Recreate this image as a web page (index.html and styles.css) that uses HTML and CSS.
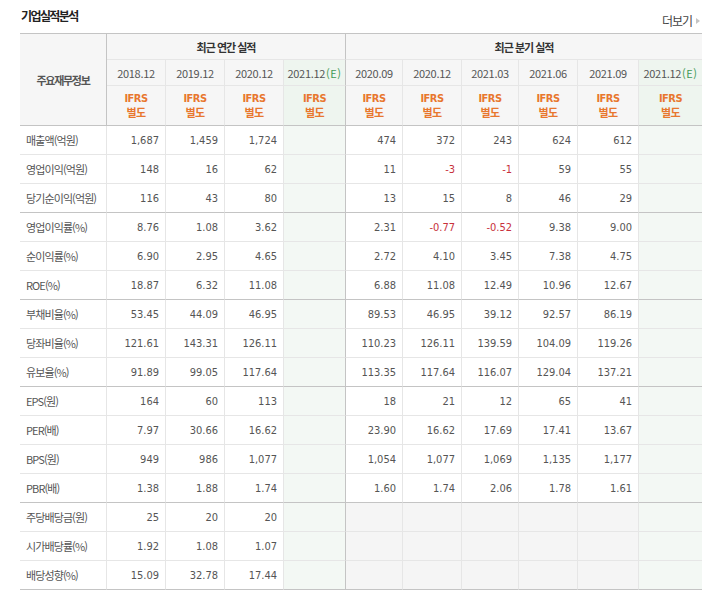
FILE: index.html
```html
<!DOCTYPE html>
<html lang="ko">
<head>
<meta charset="utf-8">
<link rel="stylesheet" href="styles.css">
</head>
<body>
<div class="wrap">
  <div class="head">
    <h3 class="title">기업실적분석</h3>
    <a class="more">더보기<span class="tri"></span></a>
  </div>
  <table class="fin">
    <colgroup>
      <col class="w-label"><col class="w59"><col class="w59"><col class="w59"><col class="w62">
      <col class="w57"><col class="w59"><col class="w57"><col class="w59"><col class="w61"><col class="w63">
    </colgroup>
    <thead>
      <tr class="h1">
        <th rowspan="3" class="corner sep-r sep-b">주요재무정보</th>
        <th colspan="4" class="grp sep-r">최근 연간 실적</th>
        <th colspan="6" class="grp last">최근 분기 실적</th>
      </tr>
      <tr class="h2">
        <th class="dt">2018.12</th>
        <th class="dt">2019.12</th>
        <th class="dt">2020.12</th>
        <th class="dt est sep-r">2021.12<em>(E)</em></th>
        <th class="dt">2020.09</th>
        <th class="dt">2020.12</th>
        <th class="dt">2021.03</th>
        <th class="dt">2021.06</th>
        <th class="dt">2021.09</th>
        <th class="dt est last">2021.12<em>(E)</em></th>
      </tr>
      <tr class="h3">
        <th class="ifrs sep-b">IFRS<br>별도</th>
        <th class="ifrs sep-b">IFRS<br>별도</th>
        <th class="ifrs sep-b">IFRS<br>별도</th>
        <th class="ifrs est sep-b sep-r">IFRS<br>별도</th>
        <th class="ifrs sep-b">IFRS<br>별도</th>
        <th class="ifrs sep-b">IFRS<br>별도</th>
        <th class="ifrs sep-b">IFRS<br>별도</th>
        <th class="ifrs sep-b">IFRS<br>별도</th>
        <th class="ifrs sep-b">IFRS<br>별도</th>
        <th class="ifrs est sep-b last">IFRS<br>별도</th>
      </tr>
    </thead>
    <tbody>
      <tr><th class="lbl">매출액(억원)</th><td>1,687</td><td>1,459</td><td>1,724</td><td class="est sep-r"></td><td>474</td><td>372</td><td>243</td><td>624</td><td>612</td><td class="est last"></td></tr>
      <tr><th class="lbl">영업이익(억원)</th><td>148</td><td>16</td><td>62</td><td class="est sep-r"></td><td>11</td><td class="neg">-3</td><td class="neg">-1</td><td>59</td><td>55</td><td class="est last"></td></tr>
      <tr class="gend"><th class="lbl">당기순이익(억원)</th><td>116</td><td>43</td><td>80</td><td class="est sep-r"></td><td>13</td><td>15</td><td>8</td><td>46</td><td>29</td><td class="est last"></td></tr>
      <tr><th class="lbl">영업이익률(%)</th><td>8.76</td><td>1.08</td><td>3.62</td><td class="est sep-r"></td><td>2.31</td><td class="neg">-0.77</td><td class="neg">-0.52</td><td>9.38</td><td>9.00</td><td class="est last"></td></tr>
      <tr><th class="lbl">순이익률(%)</th><td>6.90</td><td>2.95</td><td>4.65</td><td class="est sep-r"></td><td>2.72</td><td>4.10</td><td>3.45</td><td>7.38</td><td>4.75</td><td class="est last"></td></tr>
      <tr class="gend"><th class="lbl">ROE(%)</th><td>18.87</td><td>6.32</td><td>11.08</td><td class="est sep-r"></td><td>6.88</td><td>11.08</td><td>12.49</td><td>10.96</td><td>12.67</td><td class="est last"></td></tr>
      <tr><th class="lbl">부채비율(%)</th><td>53.45</td><td>44.09</td><td>46.95</td><td class="est sep-r"></td><td>89.53</td><td>46.95</td><td>39.12</td><td>92.57</td><td>86.19</td><td class="est last"></td></tr>
      <tr><th class="lbl">당좌비율(%)</th><td>121.61</td><td>143.31</td><td>126.11</td><td class="est sep-r"></td><td>110.23</td><td>126.11</td><td>139.59</td><td>104.09</td><td>119.26</td><td class="est last"></td></tr>
      <tr class="gend"><th class="lbl">유보율(%)</th><td>91.89</td><td>99.05</td><td>117.64</td><td class="est sep-r"></td><td>113.35</td><td>117.64</td><td>116.07</td><td>129.04</td><td>137.21</td><td class="est last"></td></tr>
      <tr><th class="lbl">EPS(원)</th><td>164</td><td>60</td><td>113</td><td class="est sep-r"></td><td>18</td><td>21</td><td>12</td><td>65</td><td>41</td><td class="est last"></td></tr>
      <tr><th class="lbl">PER(배)</th><td>7.97</td><td>30.66</td><td>16.62</td><td class="est sep-r"></td><td>23.90</td><td>16.62</td><td>17.69</td><td>17.41</td><td>13.67</td><td class="est last"></td></tr>
      <tr><th class="lbl">BPS(원)</th><td>949</td><td>986</td><td>1,077</td><td class="est sep-r"></td><td>1,054</td><td>1,077</td><td>1,069</td><td>1,135</td><td>1,177</td><td class="est last"></td></tr>
      <tr class="gend"><th class="lbl">PBR(배)</th><td>1.38</td><td>1.88</td><td>1.74</td><td class="est sep-r"></td><td>1.60</td><td>1.74</td><td>2.06</td><td>1.78</td><td>1.61</td><td class="est last"></td></tr>
      <tr><th class="lbl">주당배당금(원)</th><td>25</td><td>20</td><td>20</td><td class="est sep-r"></td><td class="na"></td><td class="na"></td><td class="na"></td><td class="na"></td><td class="na"></td><td class="est na last"></td></tr>
      <tr><th class="lbl">시가배당률(%)</th><td>1.92</td><td>1.08</td><td>1.07</td><td class="est sep-r"></td><td class="na"></td><td class="na"></td><td class="na"></td><td class="na"></td><td class="na"></td><td class="est na last"></td></tr>
      <tr class="gend"><th class="lbl">배당성향(%)</th><td>15.09</td><td>32.78</td><td>17.44</td><td class="est sep-r"></td><td class="na"></td><td class="na"></td><td class="na"></td><td class="na"></td><td class="na"></td><td class="est na last"></td></tr>
    </tbody>
  </table>
</div>
</body>
</html>
```
FILE: styles.css
```css
html, body {
  margin: 0;
  padding: 0;
  background: #fff;
}
body {
  font-family: "Noto Sans CJK KR", "Noto Sans", sans-serif;
  color: #444;
}
.wrap {
  padding-left: 20px;
  width: 682px;
}
.head {
  display: flex;
  justify-content: space-between;
  align-items: flex-end;
  height: 33px;
}
.title {
  margin: 0 0 10px 1px;
  font-size: 12px;
  line-height: 14px;
  font-weight: bold;
  color: #222;
  letter-spacing: -1.6px;
}
.more {
  display: flex;
  align-items: center;
  margin: 0 2px 5px 0;
  font-size: 12px;
  line-height: 14px;
  color: #444;
  letter-spacing: -1px;
}
.tri {
  width: 0;
  height: 0;
  margin-left: 4px;
  border-left: 4px solid #c4c4c4;
  border-top: 3px solid transparent;
  border-bottom: 3px solid transparent;
}
.fin {
  border-collapse: separate;
  border-spacing: 0;
  table-layout: fixed;
  width: 682px;
  border-top: 1px solid #c4c4c4;
}
.w-label { width: 87px; }
.w57 { width: 57px; }
.w59 { width: 59px; }
.w61 { width: 61px; }
.w62 { width: 62px; }
.w63 { width: 63px; }
.fin th, .fin td {
  padding: 0;
  border-right: 1px solid #e6e6e6;
  border-bottom: 1px solid #e6e6e6;
  font-weight: normal;
}
.fin .last { border-right: 0; }
.fin .sep-r { border-right-color: #c4c4c4; }
.fin .sep-b, .fin .gend th, .fin .gend td { border-bottom-color: #c4c4c4; }
.fin thead th {
  background: #f6f6f6;
  text-align: center;
}
.h1 th { height: 25px; }
.h2 th { height: 25px; }
.h3 th { height: 39px; }
.corner {
  font-size: 11px;
  font-weight: bold !important;
  color: #555;
  letter-spacing: -1.3px;
}
.grp {
  font-size: 11px;
  font-weight: bold !important;
  color: #333;
  letter-spacing: -1px;
}
.dt {
  font-size: 11px;
  color: #555;
  letter-spacing: -0.3px;
}
.dt em {
  font-style: normal;
  color: #3f9a55;
  margin-left: 1px;
  letter-spacing: 0.5px;
}
.ifrs {
  font-family: "DejaVu Sans Condensed", "DejaVu Sans", "Noto Sans CJK KR", sans-serif;
  font-size: 11px;
  line-height: 15px;
  font-weight: bold !important;
  color: #e8772e;
  letter-spacing: -0.5px;
}
.fin thead .est { background: #eef5ef; }
.fin tbody td {
  height: 28px;
  text-align: right;
  padding-right: 6px;
  font-family: "DejaVu Sans Condensed", "DejaVu Sans", sans-serif;
  font-size: 11px;
  color: #555;
}
.fin tbody .lbl {
  text-align: left;
  padding-left: 6px;
  font-size: 11px;
  color: #555;
  letter-spacing: -0.9px;
  background: #fff;
}
.fin tbody td.est { background: #f3f8f4; }
.fin tbody td.na { background: #f5f5f5; }
.fin tbody td.est.na { background: #f3f8f4; }
.fin tbody td.neg { color: #c8313c; }
```
